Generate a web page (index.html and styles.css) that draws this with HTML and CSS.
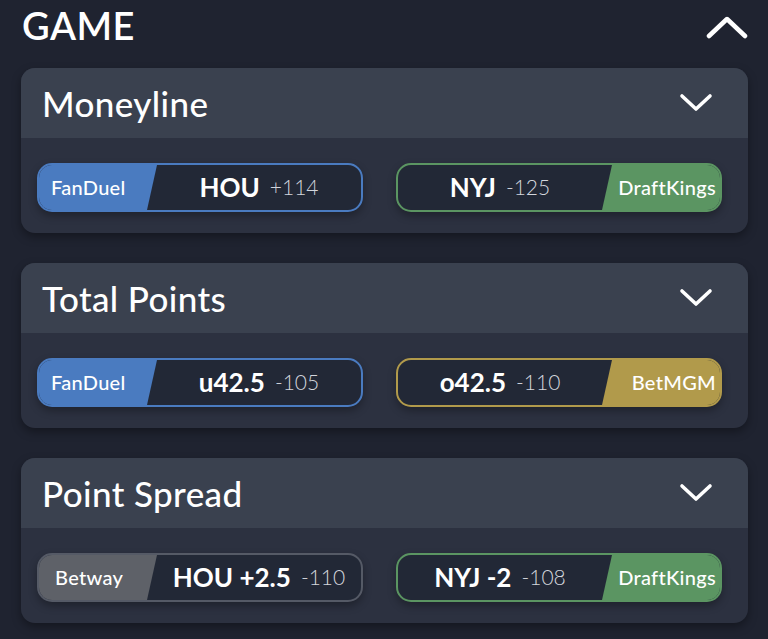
FILE: index.html
```html
<!DOCTYPE html>
<html lang="en">
<head>
    <meta charset="UTF-8">
    <meta name="viewport" content="width=device-width, initial-scale=1.0">
    <title>Game Odds</title>
    <link rel="stylesheet" href="styles.css">
</head>
<body>
    <div class="section-head">
        <h1>GAME</h1>
        <svg class="chevron-up" width="42" height="24" viewBox="0 0 42 24">
            <path d="M3 21 L21 4 L39 21" fill="none" stroke="#fff" stroke-width="4.5" stroke-linecap="round" stroke-linejoin="round"/>
        </svg>
    </div>

    <div class="card">
        <div class="card-head">
            <h2>Moneyline</h2>
            <svg class="chevron" width="34" height="20" viewBox="0 0 34 20">
                <path d="M3 3 L17 16 L31 3" fill="none" stroke="#fff" stroke-width="3.6" stroke-linecap="round" stroke-linejoin="round"/>
            </svg>
        </div>
        <div class="card-body">
            <div class="bet left fanduel">
                <span class="book">FanDuel</span>
                <span class="odds"><b>HOU</b> +114</span>
            </div>
            <div class="bet right draftkings">
                <span class="odds"><b>NYJ</b> -125</span>
                <span class="book">DraftKings</span>
            </div>
        </div>
    </div>

    <div class="card">
        <div class="card-head">
            <h2>Total Points</h2>
            <svg class="chevron" width="34" height="20" viewBox="0 0 34 20">
                <path d="M3 3 L17 16 L31 3" fill="none" stroke="#fff" stroke-width="3.6" stroke-linecap="round" stroke-linejoin="round"/>
            </svg>
        </div>
        <div class="card-body">
            <div class="bet left fanduel">
                <span class="book">FanDuel</span>
                <span class="odds"><b>u42.5</b> -105</span>
            </div>
            <div class="bet right betmgm">
                <span class="odds"><b>o42.5</b> -110</span>
                <span class="book">BetMGM</span>
            </div>
        </div>
    </div>

    <div class="card">
        <div class="card-head">
            <h2>Point Spread</h2>
            <svg class="chevron" width="34" height="20" viewBox="0 0 34 20">
                <path d="M3 3 L17 16 L31 3" fill="none" stroke="#fff" stroke-width="3.6" stroke-linecap="round" stroke-linejoin="round"/>
            </svg>
        </div>
        <div class="card-body">
            <div class="bet left betway">
                <span class="book">Betway</span>
                <span class="odds"><b>HOU +2.5</b> -110</span>
            </div>
            <div class="bet right draftkings">
                <span class="odds"><b>NYJ -2</b> -108</span>
                <span class="book">DraftKings</span>
            </div>
        </div>
    </div>
</body>
</html>
```

FILE: styles.css
```css
body {
    margin: 0;
    background-color: #1f2330;
    font-family: Lato, 'Open Sans', sans-serif;
    color: #fff;
}
.section-head {
    display: flex;
    justify-content: space-between;
    align-items: center;
    height: 50px;
    padding: 0 20px 0 22px;
    margin-bottom: 18px;
}
h1 {
    margin: 0;
    font-size: 38px;
    font-weight: 600;
    letter-spacing: 0.5px;
}
.chevron-up {
    margin-top: 4px;
}
.card {
    margin: 0 20px 30px 21px;
    border-radius: 14px;
    overflow: hidden;
    background-color: #2c3140;
    box-shadow: 0 4px 10px rgba(0, 0, 0, 0.35);
}
.card-head {
    display: flex;
    justify-content: space-between;
    align-items: center;
    height: 70px;
    padding: 0 35px 0 21px;
    background-color: #3a414f;
}
h2 {
    margin: 0;
    font-size: 35px;
    font-weight: 500;
    letter-spacing: 0.4px;
}
.card-body {
    display: flex;
    justify-content: space-between;
    height: 95px;
    padding: 25px 26px 0 16px;
    box-sizing: border-box;
}
.bet {
    display: flex;
    width: 326px;
    height: 49px;
    box-sizing: border-box;
    border: 2px solid;
    border-radius: 15px;
    overflow: hidden;
    background-color: #222836;
    box-shadow: 0 4px 8px rgba(0, 0, 0, 0.3);
}
.book {
    display: flex;
    align-items: center;
    width: 118px;
    flex-shrink: 0;
    box-sizing: border-box;
    padding-bottom: 2px;
    font-size: 20px;
    font-weight: 500;
    letter-spacing: 0.3px;
}
.left .book {
    padding-left: 12px;
    clip-path: polygon(0 0, 100% 0, calc(100% - 10px) 100%, 0 100%);
}
.right .book {
    justify-content: flex-end;
    padding-right: 4px;
    clip-path: polygon(10px 0, 100% 0, 100% 100%, 0 100%);
}
.odds {
    flex: 1;
    display: flex;
    align-items: center;
    justify-content: center;
    gap: 10px;
    padding-bottom: 2px;
    font-size: 21px;
    color: #d3d6dd;
    font-weight: 300;
}
.odds b {
    font-size: 26px;
    font-weight: 700;
    color: #fff;
}
.fanduel {
    border-color: #4a7bc0;
}
.fanduel .book {
    background-color: #4a7bc0;
}
.draftkings {
    border-color: #5b9562;
}
.draftkings .book {
    background-color: #5b9562;
}
.betmgm {
    border-color: #b19a4b;
}
.betmgm .book {
    background-color: #b19a4b;
}
.betway {
    border-color: #555a66;
}
.betway .book {
    background-color: #5e6168;
    padding-left: 16px;
}
```
